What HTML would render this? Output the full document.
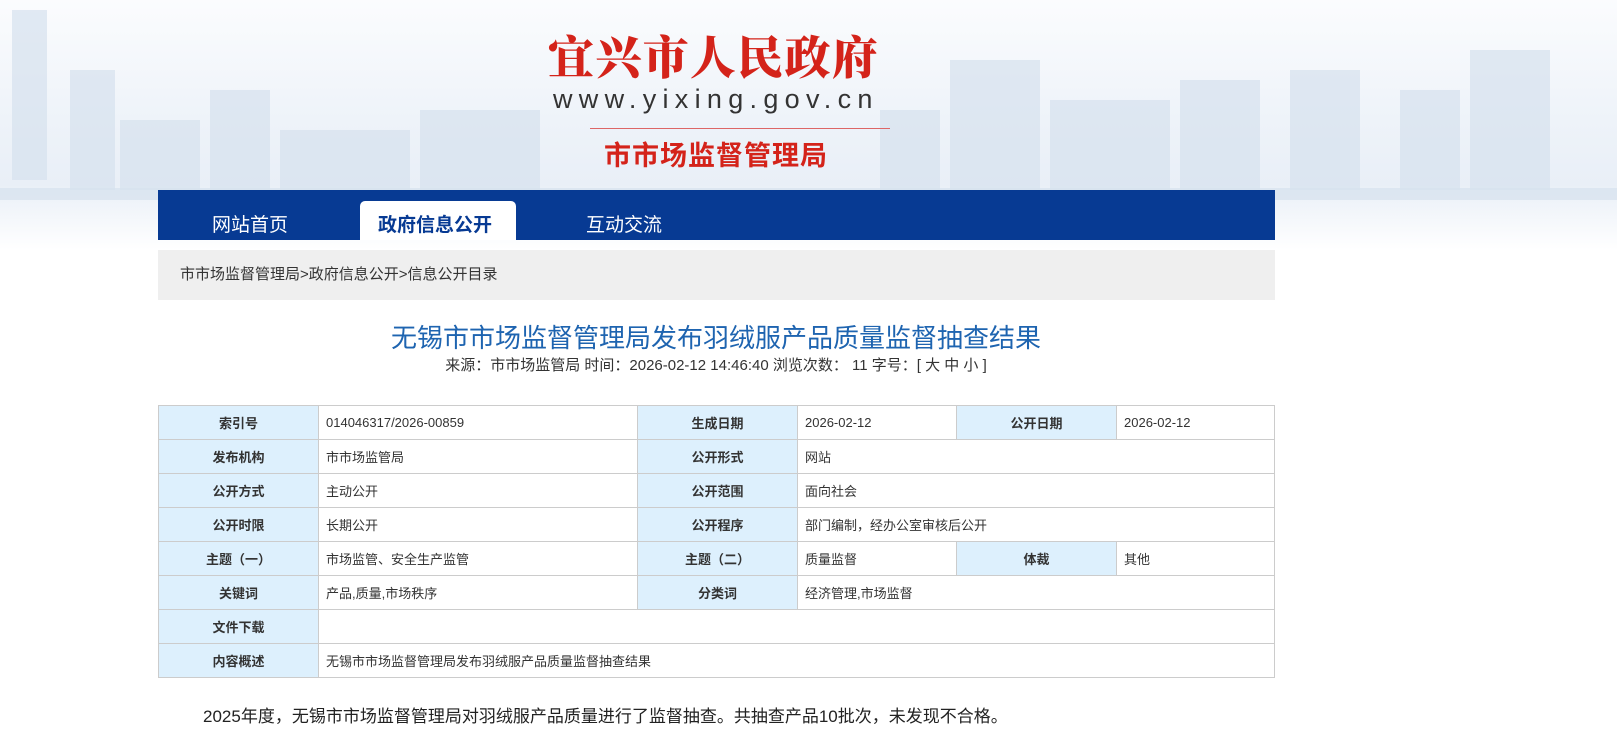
<!DOCTYPE html>
<html><head><meta charset="utf-8"><style>
body{margin:0;width:1617px;height:752px;overflow:hidden;background:#fff;font-family:"Liberation Sans","Noto Sans CJK SC",sans-serif;position:relative}
.hdr{position:absolute;left:0;top:0;width:1617px;height:250px;background:linear-gradient(#fbfcfe 0,#eef3f9 120px,#e9eff7 185px,#fff 250px)}
.bld{position:absolute;bottom:60px;background:#d6e1ee;opacity:.7}
.t1{position:absolute;left:548px;top:22px;font-family:"Noto Serif CJK SC",serif;font-weight:900;font-size:46px;color:#d4231a;letter-spacing:1.3px}
.t2{position:absolute;left:553px;top:84px;font-size:27px;color:#333;letter-spacing:6.3px}
.line{position:absolute;left:590px;top:128px;width:300px;height:1px;background:#d66}
.t3{position:absolute;left:604px;top:134px;font-size:27px;font-weight:bold;color:#d4231a;letter-spacing:1px}
.nav{position:absolute;left:158px;top:190px;width:1117px;height:50px;background:#073a93}
.nav span{position:absolute;top:20px;font-size:19px;color:#fff}
.act{position:absolute;left:202px;top:11px;width:156px;height:39px;background:#fff;border-radius:5px 5px 0 0}
.bc{position:absolute;left:158px;top:250px;width:1117px;height:50px;background:#efefef;font-size:15px;color:#333;line-height:50px;text-indent:22px}
h1{position:absolute;left:0;width:1432px;text-align:center;top:318px;margin:0;font-weight:normal;font-size:26px;color:#1e64b0}
.meta{position:absolute;left:0;width:1432px;text-align:center;top:354px;font-size:15px;color:#333}
table{position:absolute;left:158px;top:405px;width:1117px;border-collapse:collapse;font-size:13px;color:#333}
td{border:1px solid #ccc;height:33px;padding:0 7px}
td.k{background:#ddf0fd;text-align:center;font-weight:bold;width:145px}
.p{position:absolute;left:203px;top:702px;font-size:17px;color:#222}
</style></head><body>
<div class="hdr">
<div class="bld" style="left:12px;width:35px;height:170px;bottom:70px"></div>
<div class="bld" style="left:70px;width:45px;height:120px"></div>
<div class="bld" style="left:120px;width:80px;height:70px"></div>
<div class="bld" style="left:210px;width:60px;height:100px"></div>
<div class="bld" style="left:280px;width:130px;height:60px"></div>
<div class="bld" style="left:420px;width:120px;height:80px"></div>
<div class="bld" style="left:880px;width:60px;height:80px"></div>
<div class="bld" style="left:950px;width:90px;height:130px"></div>
<div class="bld" style="left:1050px;width:120px;height:90px"></div>
<div class="bld" style="left:1180px;width:80px;height:110px"></div>
<div class="bld" style="left:1290px;width:70px;height:120px"></div>
<div class="bld" style="left:1400px;width:60px;height:100px"></div>
<div class="bld" style="left:1470px;width:80px;height:140px"></div>
<div class="bld" style="left:0;width:1617px;height:12px;bottom:50px"></div>
</div>
<div class="t1">宜兴市人民政府</div>
<div class="t2">www.yixing.gov.cn</div>
<div class="line"></div>
<div class="t3">市市场监督管理局</div>
<div class="nav"><div class="act"></div>
<span style="left:54px">网站首页</span>
<span style="left:220px;color:#073a93;font-weight:bold">政府信息公开</span>
<span style="left:428px">互动交流</span></div>
<div class="bc">市市场监督管理局&gt;政府信息公开&gt;信息公开目录</div>
<h1>无锡市市场监督管理局发布羽绒服产品质量监督抽查结果</h1>
<div class="meta">来源：市市场监管局 时间：2026-02-12 14:46:40 浏览次数： 11 字号：[ 大 中 小 ]</div>
<table>
<tr><td class="k">索引号</td><td style="width:304px">014046317/2026-00859</td><td class="k">生成日期</td><td style="width:144px">2026-02-12</td><td class="k">公开日期</td><td>2026-02-12</td></tr>
<tr><td class="k">发布机构</td><td>市市场监管局</td><td class="k">公开形式</td><td colspan="3">网站</td></tr>
<tr><td class="k">公开方式</td><td>主动公开</td><td class="k">公开范围</td><td colspan="3">面向社会</td></tr>
<tr><td class="k">公开时限</td><td>长期公开</td><td class="k">公开程序</td><td colspan="3">部门编制，经办公室审核后公开</td></tr>
<tr><td class="k">主题（一）</td><td>市场监管、安全生产监管</td><td class="k">主题（二）</td><td>质量监督</td><td class="k">体裁</td><td>其他</td></tr>
<tr><td class="k">关键词</td><td>产品,质量,市场秩序</td><td class="k">分类词</td><td colspan="3">经济管理,市场监督</td></tr>
<tr><td class="k">文件下载</td><td colspan="5"></td></tr>
<tr><td class="k">内容概述</td><td colspan="5">无锡市市场监督管理局发布羽绒服产品质量监督抽查结果</td></tr>
</table>
<div class="p">2025年度，无锡市市场监督管理局对羽绒服产品质量进行了监督抽查。共抽查产品10批次，未发现不合格。</div>
</body></html>
